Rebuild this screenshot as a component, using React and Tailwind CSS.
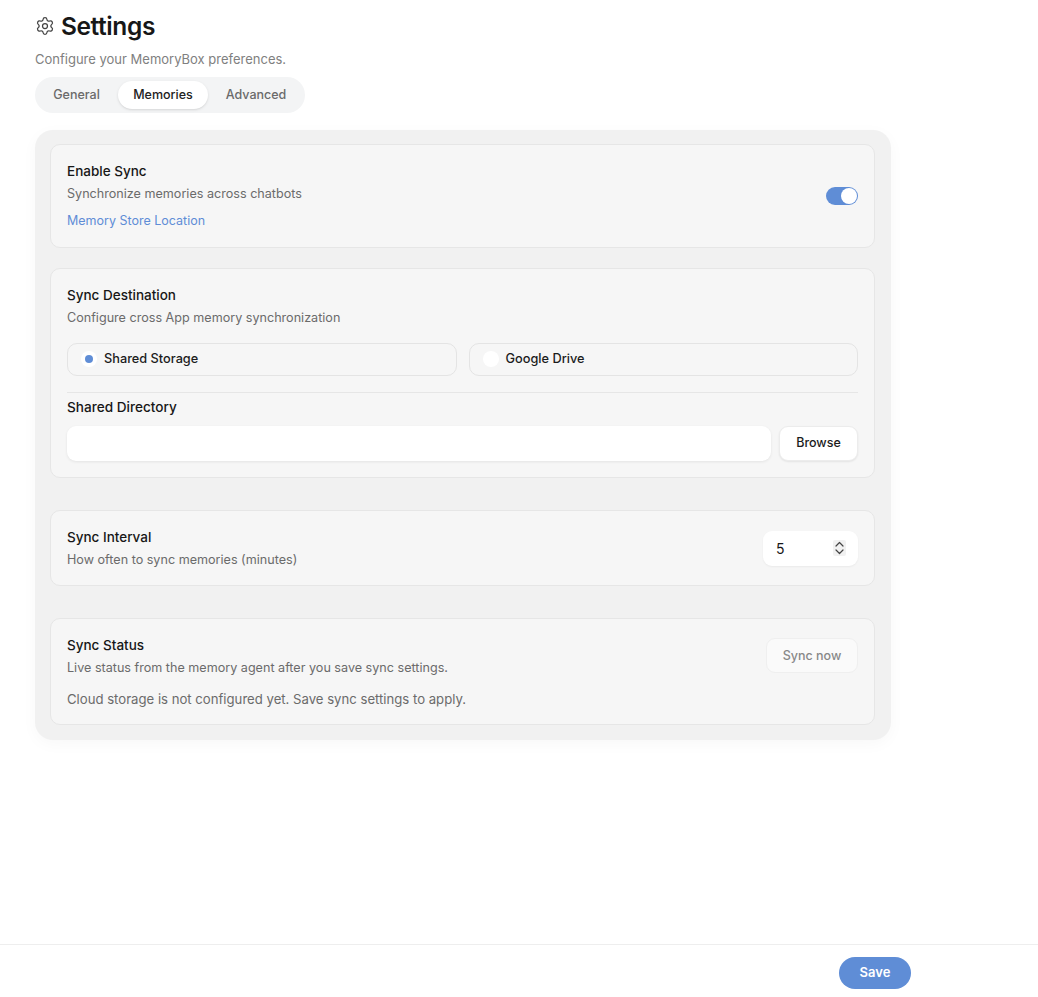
import { Settings } from "lucide-react";

function Card({ className = "", children }) {
  return (
    <div className={`rounded-[10px] border border-[#e6e6e6] bg-[#f6f6f6] px-4 ${className}`}>
      {children}
    </div>
  );
}

function Radio({ label, checked, className = "" }) {
  return (
    <div className={`flex h-[33px] items-center rounded-[10px] border border-[#e4e4e4] pb-[2px] pl-[13px] ${className}`}>
      <span className="flex h-4 w-4 items-center justify-center rounded-full bg-white">
        {checked && <span className="h-2 w-2 rounded-full bg-[#5f8dd6]"></span>}
      </span>
      <span className="ml-[7px] text-[12.75px] font-medium text-[#1c1c1c]">{label}</span>
    </div>
  );
}

export default function App() {
  return (
    <div className="flex h-screen flex-col bg-white font-['Inter',sans-serif] text-[#171717]">
      <div className="flex-1 pl-[35px]">
        <div className="flex h-[42px] items-center pt-[9px]">
          <Settings className="h-5 w-5 shrink-0 text-[#444]" strokeWidth={1.5} />
          <h1 className="ml-[6px] mt-px text-[24.5px] font-semibold tracking-[-0.4px]">Settings</h1>
        </div>
        <p className="mt-[7px] text-[13px] leading-[20px] text-[#808080]">
          Configure your MemoryBox preferences.
        </p>
        <div className="mt-2 flex h-9 w-[270px] items-center rounded-full bg-[#f3f4f5] pl-1 text-[12.5px] font-medium text-[#6a6a6a]">
          <span className="w-[75px] shrink-0 text-center">General</span>
          <span className="ml-1 flex h-7 w-[90px] shrink-0 items-center justify-center rounded-full bg-white text-[#222] shadow-sm">
            Memories
          </span>
          <span className="w-24 shrink-0 text-center">Advanced</span>
        </div>

        <div className="mt-[17px] flex w-[856px] flex-col rounded-[18px] bg-[#f1f1f1] pb-[15px] pl-[15px] pr-4 pt-[14px] shadow-[0_4px_16px_rgba(0,0,0,0.03)]">
          <Card className="flex h-[104px] items-center justify-between">
            <div>
              <div className="text-[13.5px] font-medium leading-[18px]">Enable Sync</div>
              <div className="mt-[5px] text-[12.6px] leading-[18px] text-[#6b6b6b]">
                Synchronize memories across chatbots
              </div>
              <div className="mt-[9px] text-[12.5px] leading-[18px] text-[#5f8dd6]">
                Memory Store Location
              </div>
            </div>
            <div className="flex h-[18px] w-8 items-center justify-end rounded-full bg-[#5f8dd6] pr-px">
              <span className="h-4 w-4 rounded-full bg-white"></span>
            </div>
          </Card>

          <Card className="mt-5 h-[210px] pt-[17px]">
            <div className="text-[13.5px] font-medium leading-[18px]">Sync Destination</div>
            <div className="mt-[5px] text-[12.6px] leading-[18px] text-[#6b6b6b]">
              Configure cross App memory synchronization
            </div>
            <div className="mt-4 grid grid-cols-2 gap-3">
              <Radio label="Shared Storage" checked />
              <Radio label="Google Drive" />
            </div>
            <div className="mt-4 border-t border-[#e6e6e6] pt-[5px] text-[13.6px] font-medium leading-[18px]">
              Shared Directory
            </div>
            <div className="mt-[10px] flex gap-2">
              <div className="h-[35px] flex-1 rounded-[9px] bg-white shadow-[0_1px_3px_rgba(0,0,0,0.08)]"></div>
              <button className="h-[35px] w-[79px] rounded-[9px] border border-[#ececec] bg-white text-[12.5px] font-medium text-[#1c1c1c] shadow-[0_1px_2px_rgba(0,0,0,0.08)]">
                Browse
              </button>
            </div>
          </Card>

          <Card className="mt-8 flex h-[76px] items-center justify-between">
            <div>
              <div className="text-[13.5px] font-medium leading-[18px]">Sync Interval</div>
              <div className="mt-[5px] text-[12.6px] leading-[18px] text-[#6b6b6b]">
                How often to sync memories (minutes)
              </div>
            </div>
            <div className="flex h-[35px] w-[95px] items-center justify-between rounded-[9px] bg-white pl-[13px] pr-3 text-[14px] shadow-[0_1px_2px_rgba(0,0,0,0.05)]">
              <span>5</span>
              <svg viewBox="0 0 13 16" className="h-4 w-[13px] rounded-[2px] bg-[#f1f1f1]" fill="none" stroke="#444" strokeWidth="1.2" strokeLinecap="round" strokeLinejoin="round">
                <path d="M3 6l3.5-3.5L10 6" />
                <path d="M3 10l3.5 3.5L10 10" />
              </svg>
            </div>
          </Card>

          <Card className="mt-8 flex h-[107px] justify-between pt-[17px]">
            <div>
              <div className="text-[13.5px] font-medium leading-[18px]">Sync Status</div>
              <div className="mt-[5px] text-[12.6px] leading-[18px] text-[#6b6b6b]">
                Live status from the memory agent after you save sync settings.
              </div>
              <div className="mt-[13px] text-[13.15px] leading-[18px] text-[#6b6b6b]">
                Cloud storage is not configured yet. Save sync settings to apply.
              </div>
            </div>
            <button className="mt-[2px] h-[35px] w-[92px] rounded-[9px] border border-[#efefef] bg-[#fafafa] pt-px text-[12.5px] font-medium text-[#888]">
              Sync now
            </button>
          </Card>
        </div>
      </div>

      <div className="flex h-[53px] items-start justify-end border-t border-[#eeeeee] pr-[127px] pt-3">
        <button className="h-8 w-[72px] rounded-full bg-[#5f8dd6] text-[13px] font-semibold text-white">
          Save
        </button>
      </div>
    </div>
  );
}
